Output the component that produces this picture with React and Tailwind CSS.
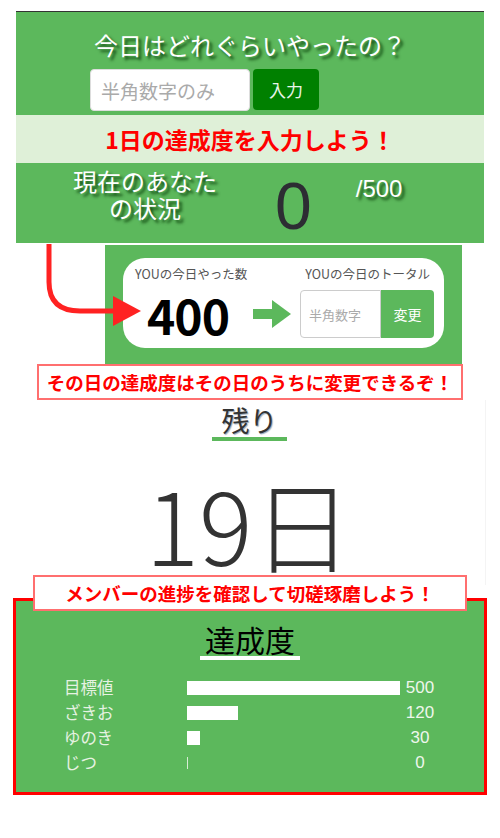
const members = [
  { name: '目標値', value: 500 },
  { name: 'ざきお', value: 120 },
  { name: 'ゆのき', value: 30 },
  { name: 'じつ', value: 0 },
]

const jp = '[font-family:"Noto_Sans_CJK_JP","Noto_Sans",sans-serif]'
const shadow = '[text-shadow:3px_3px_3px_rgba(0,50,0,0.8)]'

function Note({ children }) {
  return (
    <div className="relative z-10 flex h-[36px] items-center justify-center border-2 border-[#ff6f6f] bg-white text-[18.5px] font-bold leading-[24px] text-[#ff0000]">
      {children}
    </div>
  )
}

export default function App() {
  const max = 500
  return (
    <div className={`relative w-[500px] min-h-[838px] bg-white pt-[11px] ${jp}`}>
      {/* curved annotation arrow */}
      <svg className="absolute left-0 top-0 z-20 pointer-events-none" width="160" height="340" viewBox="0 0 160 340">
        <path d="M49 244 V282 Q49 311 80 311 H118" fill="none" stroke="#f22" strokeWidth="5" />
        <polygon points="113,296 141,311 113,326" fill="#f22" />
      </svg>

      {/* ── input panel ── */}
      <div className="mx-4 border-t border-[#333] bg-[#5cb85c]">
        <h1 className={`pt-[17px] text-center text-[24px] leading-[32px] text-white ${shadow}`}>
          今日はどれぐらいやったの？
        </h1>
        <div className="mt-[8px] flex pl-[74px]">
          <input
            className="h-[42px] w-[160px] rounded border border-[#ddd] bg-white px-[10px] text-[19px] text-[#555] outline-none placeholder:text-[#aaa]"
            placeholder="半角数字のみ"
          />
          <button className="ml-[3px] h-[41px] w-[66px] rounded bg-[#008000] text-[17px] text-[#e8f5e8]">入力</button>
        </div>
        <div className="mt-[4px] flex h-[48px] items-center justify-center bg-[#dff0d8] text-[23px] font-bold text-[#ff0000]">
          1日の達成度を入力しよう！
        </div>
        <div className="flex h-[80px] items-start">
          <div className={`ml-[50px] w-[158px] pt-[4px] text-center text-[24px] leading-[27px] text-white ${shadow}`}>
            現在のあなた<br />の状況
          </div>
          <div className='ml-[51px] pt-[6px] text-[66px] font-medium leading-[74px] text-[#2d2d33] [font-family:"Liberation_Sans",sans-serif]'>0</div>
          <div className={`ml-[44px] pt-[12px] text-[24px] leading-[28px] text-white [font-family:"Liberation_Sans",sans-serif] ${shadow}`}>/500</div>
        </div>
      </div>

      {/* ── edit panel ── */}
      <div className="ml-[105px] mt-[2px] w-[357px] bg-[#5cb85c] pb-[16px] pt-[13px]">
        <div className="mx-[18px] flex h-[90px] flex-col rounded-[22px] bg-white">
          <div className="flex justify-between pl-[12px] pr-[14px] pt-[8px] text-[12.5px] leading-[16px] text-[#555]">
            <span>YOUの今日やった数</span>
            <span>YOUの今日のトータル</span>
          </div>
          <div className="mt-[6px] flex items-center">
            <div className="ml-[24px] w-[82px] text-[48px] font-bold leading-[52px] tracking-[-1px] text-black">400</div>
            <svg className="ml-[24px]" width="38" height="30" viewBox="0 0 38 30">
              <rect x="0" y="10" width="22" height="10" fill="#5cb85c" />
              <polygon points="19,1 38,15 19,29" fill="#5cb85c" />
            </svg>
            <div className="ml-[9px] flex h-[48px]">
              <input
                className="h-[48px] w-[81px] rounded-l border border-[#ccc] bg-white px-2 text-[13px] outline-none placeholder:text-[#aaa]"
                placeholder="半角数字"
              />
              <button className="h-[48px] w-[53px] rounded-r bg-[#5cb85c] text-[14px] text-white">変更</button>
            </div>
          </div>
        </div>
      </div>

      <div className="mx-[37px]">
        <Note>その日の達成度はその日のうちに変更できるぞ！</Note>
      </div>

      {/* ── remaining days ── */}
      <div className="mr-[14px] border-r border-[#f4f4f4] pb-[2px] pt-[3px]">
        <div className="flex justify-center pl-[14px]">
          <span className="inline-block border-b-4 border-[#5cb85c] px-[9px] text-[28px] leading-[34px] text-[#333] [text-shadow:1px_1px_1px_#9ab]">
            残り
          </span>
        </div>
        <div className="mt-[22px] pl-[13px] text-center text-[100px] font-light leading-[120px] text-[#333]">19日</div>
      </div>

      <div className="mx-[33px] -mt-[10px]">
        <Note>メンバーの進捗を確認して切磋琢磨しよう！</Note>
      </div>

      {/* ── progress box ── */}
      <div className="mx-[13px] -mt-[13px] border-[3px] border-[#ff0000] bg-[#5cb85c] pb-[17px] pt-[21px]">
        <div className="flex justify-center">
          <span className="inline-block border-b-4 border-white px-[5px] text-[30px] leading-[34px] text-black">達成度</span>
        </div>
        <div className="mt-[15px] flex flex-col">
          {members.map(({ name, value }) => (
            <div key={name} className="flex h-[25px] items-center">
              <span className="ml-[48px] w-[123px] text-[16.5px] text-[#e6f2e2]">{name}</span>
              <div className="w-[216px]">
                <div
                  className={value > 0 ? 'h-[14px] bg-white' : 'h-[12px] bg-[#d8ecd5]'}
                  style={{ width: value > 0 ? Math.round((value / max) * 213) : 1 }}
                />
              </div>
              <span className='w-[34px] text-center text-[17px] text-[#eef6ec] [font-family:"Liberation_Sans",sans-serif]'>{value}</span>
            </div>
          ))}
        </div>
      </div>
    </div>
  )
}
